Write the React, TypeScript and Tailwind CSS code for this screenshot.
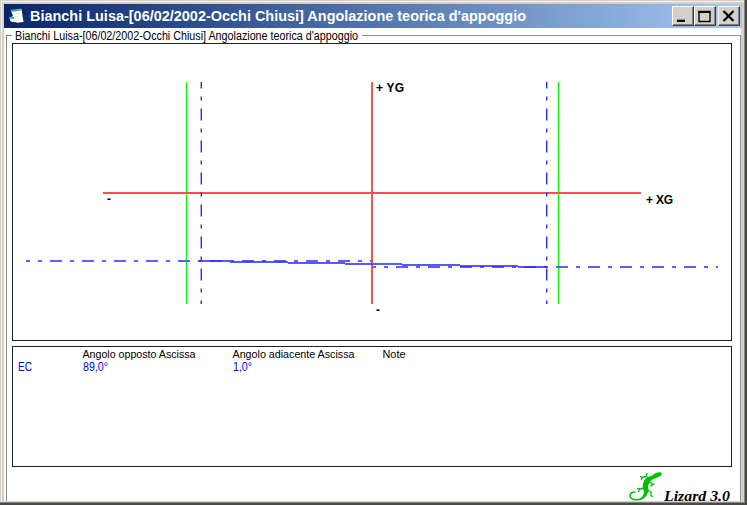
import clsx from "clsx";

const TITLE = "Bianchi Luisa-[06/02/2002-Occhi Chiusi] Angolazione teorica d'appoggio";

export default function App() {
  return (
    <div className="flex h-[505px] w-[747px] flex-col overflow-hidden border-r-2 border-b-2 border-[#484848] bg-[#d6d0c8] pt-1 pl-1 font-['Liberation_Sans',Arial,sans-serif] shadow-[inset_-1px_-1px_0_#8a8680,inset_1px_1px_0_#d4d0c8,inset_2px_2px_0_#f4f2ee]">
      <TitleBar />
      <div className="mr-1 mb-[2px] flex min-h-0 flex-1 flex-col bg-white pr-[1px] pl-[2px]">
        <GroupBox />
      </div>
    </div>
  );
}

function TitleBar() {
  return (
    <div className="mr-[3px] flex h-6 shrink-0 items-center bg-linear-to-r from-[#0a246a] to-[#a6caf0] pr-[2px] pl-[5px]">
      <FormIcon />
      <svg className="ml-[4px] h-6 w-[510px] shrink-0">
        <text
          x="0"
          y="17"
          textLength="496"
          lengthAdjust="spacingAndGlyphs"
          className="fill-white text-[14px] font-bold"
        >
          {TITLE}
        </text>
      </svg>
      <div className="ml-auto flex">
        <CaptionButton>
          <path d="M5 14.8h8" strokeWidth="2.2" />
        </CaptionButton>
        <CaptionButton>
          <path d="M5 5.5h11v10H5z" strokeWidth="1.4" />
          <path d="M4.5 6h12" strokeWidth="2" />
        </CaptionButton>
        <CaptionButton className="ml-[2px]">
          <path d="M5.5 5l10 10M15.5 5l-10 10" strokeWidth="2.2" />
        </CaptionButton>
      </div>
    </div>
  );
}

function CaptionButton(props: {
  children: React.ReactNode;
  className?: string;
}) {
  return (
    <button
      className={clsx(
        "h-5 w-[22px] border border-t-white border-r-[#404040] border-b-[#404040] border-l-white bg-[#d4d0c8] shadow-[inset_-1px_-1px_0_#808080]",
        props.className,
      )}
    >
      <svg
        viewBox="1 1 20 18"
        className="block h-[18px] w-5 fill-none stroke-black"
      >
        {props.children}
      </svg>
    </button>
  );
}

function FormIcon() {
  return (
    <svg viewBox="0 0 17 17" className="h-[17px] w-[17px] shrink-0">
      <path d="M12 5l5 9.500h-5l-5 1z" fill="#303030" />
      <path d="M2 2.500l10.500-1.500 2 13-8 1z" fill="#fff" />
      <path d="M1.500 2l10.500-1.500 .5 2L2 4z" fill="#4fa8ac" />
      <path d="M4 6.500l7-.8M4.500 9l7-.8" stroke="#d5e6ea" strokeWidth=".7" />
      <path d="M.5 9.500l4-1.500 3 3-1 4-5-1.500z" fill="#f4fafa" />
      <path d="M0 10.500q2-3 5-1.500l.5 2z" fill="#40aaa8" />
      <path d="M0 13l5 1.500 3-.5-2.500 2.500z" fill="#202020" />
    </svg>
  );
}

function GroupBox() {
  return (
    <fieldset className="flex min-h-0 flex-1 flex-col">
      <div className="flex h-[15px] shrink-0">
        <div className="mt-[7px] w-[6px] border-t border-l border-[#808080]" />
        <svg className="ml-[3px] h-[15px] w-[347px] shrink-0 overflow-visible">
          <text
            x="0"
            y="12"
            textLength="343"
            lengthAdjust="spacingAndGlyphs"
            className="fill-black text-[12px]"
          >
            {TITLE}
          </text>
        </svg>
        <div className="mt-[7px] flex-1 border-t border-r border-[#909090]" />
      </div>
      <div className="flex min-h-0 flex-1 flex-col border-r border-l border-[#909090] pr-2 pl-[5px]">
        <div className="h-[298px] shrink-0 border border-[#202020]">
          <SupportChart />
        </div>
        <ResultTable />
        <div className="flex shrink-0 justify-end pt-1">
          <LizardIcon />
          <svg className="mr-px h-[31px] w-[68px] shrink-0 overflow-visible">
            <text
              x="1"
              y="30"
              textLength="66"
              lengthAdjust="spacingAndGlyphs"
              className="fill-black font-['Liberation_Serif',serif] text-[15px] font-bold italic"
            >
              Lizard 3.0
            </text>
          </svg>
        </div>
      </div>
    </fieldset>
  );
}

function SupportChart() {
  return (
    <svg viewBox="13 44 718 296" className="block h-[296px] w-[718px]">
      {/* foot limits */}
      <g stroke="#00ff00" strokeWidth="1.4">
        <path d="M186.500 82v222M558.500 82v222" />
      </g>
      {/* main axes */}
      <g stroke="#ff5050" strokeWidth="2">
        <path d="M103 193h538M372 82v222" />
      </g>
      <g fill="none" stroke="#2828ff" strokeWidth="1.4">
        <path
          d="M201.300 82v222M546.700 82v222"
          strokeDasharray="12 8 4 8"
          strokeDashoffset="5.500"
        />
      </g>
      <g fill="none" stroke="#5c5cff" strokeWidth="2">
        <path
          d="M26 261h346M372 267h346"
          strokeDasharray="12 8 4 8"
          strokeDashoffset="8"
        />
      </g>
      {/* measured support line */}
      <path
        d="M199 261h31M230 262h58M288 263h57M345 264h57M402 265h58M460 266h58M518 267h29"
        stroke="#3030ff"
        strokeOpacity=".8"
        strokeWidth="1.900"
      />
      <g className="fill-black text-[12px] font-bold">
        <text x="376" y="92" textLength="28">
          + YG
        </text>
        <text x="646" y="204" textLength="27">
          + XG
        </text>
        <text x="107" y="203">
          -
        </text>
        <text x="376" y="314">
          -
        </text>
      </g>
    </svg>
  );
}

const columns = [
  { x: 70, label: "Angolo opposto Ascissa", width: 113, value: "89,0°", valueWidth: 25 },
  { x: 220, label: "Angolo adiacente Ascissa", width: 122, value: "1,0°", valueWidth: 19 },
  { x: 370, label: "Note", width: 23, value: "", valueWidth: 0 },
];

function ResultTable() {
  return (
    <div className="mt-[5px] h-[121px] shrink-0 border border-[#202020]">
      <svg className="block h-[40px] w-full overflow-visible text-[12px]">
        <text
          x="5"
          y="24"
          textLength="14"
          lengthAdjust="spacingAndGlyphs"
          className="fill-[#0000ff]"
        >
          EC
        </text>
        {columns.map((c) => (
          <g key={c.label}>
            <text
              x={c.x - 0.5}
              y="10.5"
              textLength={c.width}
              lengthAdjust="spacingAndGlyphs"
              className="fill-black text-[11.5px]"
            >
              {c.label}
            </text>
            {c.value && (
              <text
                x={c.x}
                y="24"
                textLength={c.valueWidth}
                lengthAdjust="spacingAndGlyphs"
                className="fill-[#0000ff]"
              >
                {c.value}
              </text>
            )}
          </g>
        ))}
      </svg>
    </div>
  );
}

function LizardIcon() {
  return (
    <svg
      viewBox="0 0 34 31"
      className="mr-px h-[31px] w-[34px] shrink-0 fill-none stroke-[#00c000]"
    >
      <path
        d="M18 19c0 5-2 8-6 9.300c-4 1-8 .7-9.700-2.300c-1-3 1-5 4.700-5"
        strokeWidth="1.500"
        strokeLinecap="round"
      />
      <path
        d="M33 1.500c1.500 1.500 .5 3-1.500 4l-7 3c-3 2-4.500 5-4.500 8c1 2 .5 4-.5 6c-1 3-3.500 5.500-7 6.500l-1-.8c3-2 4.500-5 4.500-8c-2-3-1.500-7 0-10.500c1.500-3 5-4.500 8.500-5.200c2-2.500 6-4 8.500-3z"
        className="fill-[#00c000] stroke-none"
      />
      <path
        d="M21 7l-3-1.500l-4 1l-.5 2M14 6.500l-1.500-1M18 5.500l1-3M22 11l2.500 2.500l-1.500 1.500M24.500 13.500l1.500 0M16 17l-4 1l-1.500 2.500M12 18l-2.500-.5M19 19l4 2v3.500M23 24.500l1.500 1"
        strokeWidth="1.300"
        strokeLinecap="round"
      />
    </svg>
  );
}
